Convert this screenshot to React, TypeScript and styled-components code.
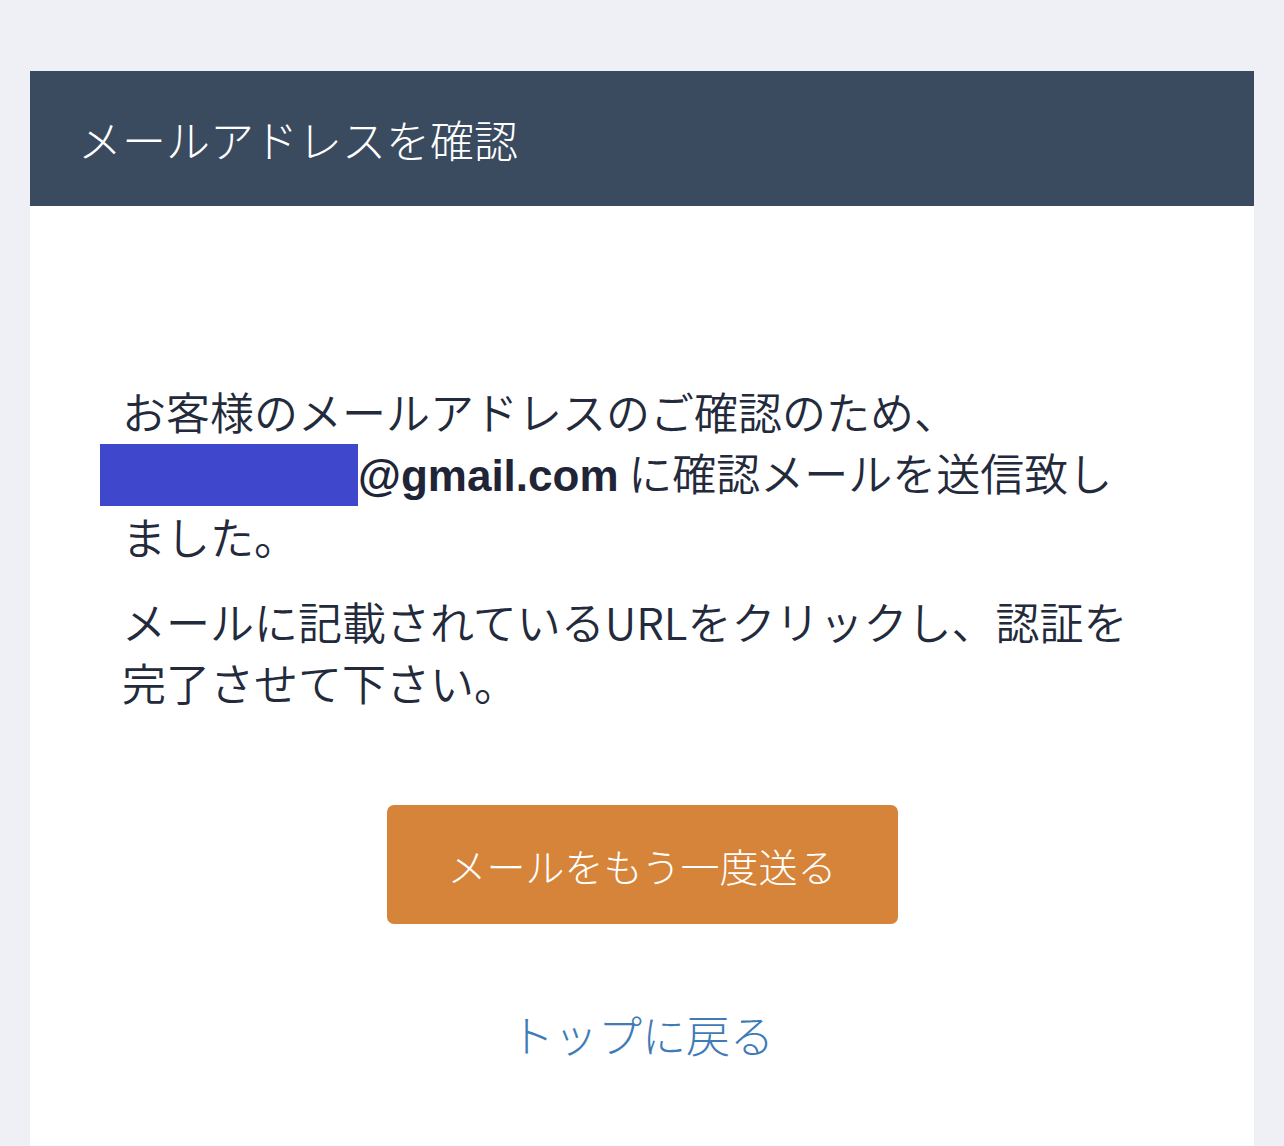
import React from 'react'
import styled, { createGlobalStyle } from 'styled-components'

const GlobalStyle = createGlobalStyle`
  html, body {
    margin: 0;
    padding: 0;
    background: #eef0f5;
  }
  body {
    font-family: "Noto Sans CJK JP", "Noto Sans", sans-serif;
  }
`

const Page = styled.div`
  min-height: 1146px;
  padding: 71px 30px 0;
  box-sizing: border-box;
  overflow: hidden;
`

const Card = styled.div`
  background: #ffffff;
  min-height: 1075px;
`

const Header = styled.div`
  height: 135px;
  background: #3a4a5f;
  display: flex;
  align-items: center;
  padding: 0 48px;
  box-sizing: border-box;
`

const Title = styled.h1`
  margin: 0;
  color: #ffffff;
  font-size: 44px;
  font-weight: 300;
  line-height: 1;
`

const Body = styled.div`
  padding: 175px 92px 0;
  display: flex;
  flex-direction: column;
`

const TextBlock = styled.div`
  padding-right: 22px;
`

const Paragraph = styled.p`
  margin: 0 0 24px;
  font-size: 44px;
  font-weight: 350;
  line-height: 61px;
  color: #232a3b;
  &:last-child {
    margin-bottom: 0;
  }
`

const EmailWrap = styled.span`
  white-space: nowrap;
`

const Redacted = styled.span`
  display: inline-block;
  vertical-align: top;
  position: relative;
  top: 2px;
  width: 258px;
  height: 62px;
  margin-left: -22px;
  background: #3f48cc;
`

const Email = styled.b`
  font-family: "Liberation Sans", Arial, sans-serif;
  font-weight: 700;
  font-size: 44px;
  color: #1f2536;
`

const Actions = styled.div`
  display: flex;
  flex-direction: column;
  align-items: center;
  margin-top: 92px;
  gap: 80px;
`

const ResendButton = styled.button`
  width: 511px;
  height: 119px;
  border: none;
  border-radius: 7px;
  background: #d6843a;
  color: #ffffff;
  font-family: inherit;
  font-size: 39px;
  font-weight: 300;
  cursor: pointer;
`

const TopLink = styled.a`
  color: #3f7bb6;
  font-size: 44px;
  font-weight: 300;
  line-height: 61px;
  text-decoration: none;
`

export default function App() {
  return (
    <>
      <GlobalStyle />
      <Page>
        <Card>
          <Header>
            <Title>メールアドレスを確認</Title>
          </Header>
          <Body>
            <TextBlock>
              <Paragraph>
                お客様のメールアドレスのご確認のため、
                <EmailWrap>
                  <Redacted />
                  <Email>@gmail.com</Email>
                </EmailWrap>{' '}
                に確認メールを送信致しました。
              </Paragraph>
              <Paragraph>
                メールに記載されているURLをクリックし、認証を完了させて下さい。
              </Paragraph>
            </TextBlock>
            <Actions>
              <ResendButton>メールをもう一度送る</ResendButton>
              <TopLink href="#">トップに戻る</TopLink>
            </Actions>
          </Body>
        </Card>
      </Page>
    </>
  )
}
